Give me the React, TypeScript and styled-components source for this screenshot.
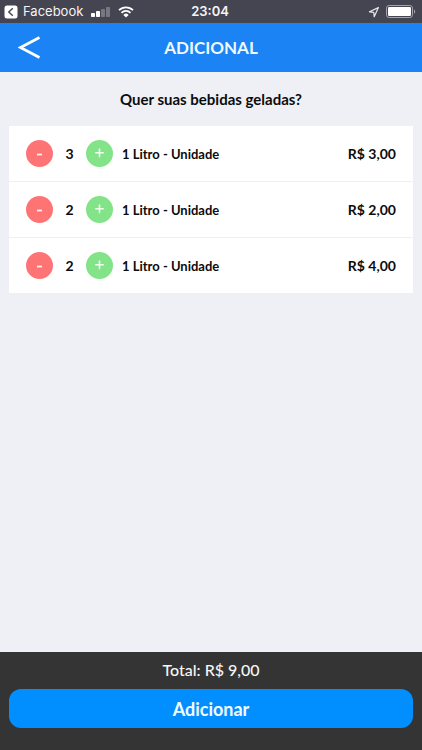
import React, { useState } from "react";
import styled, { createGlobalStyle } from "styled-components";

const GlobalStyle = createGlobalStyle`
  * { box-sizing: border-box; }
  body { margin: 0; background: #eff0f5; }
  button { border: 0; padding: 0; font: inherit; cursor: pointer; }
`;

const Screen = styled.div`
  min-height: 100vh;
  display: flex;
  flex-direction: column;
  background: #eff0f5;
  color: #0c0c0e;
  font-family: Lato, "Open Sans", sans-serif;
`;

const StatusBar = styled.div`
  display: grid;
  grid-template-columns: 1fr auto 1fr;
  align-items: center;
  height: 23px;
  padding: 0 6px 0 4px;
  background: #454451;
  color: #f4f4f6;
  font-family: Inter, Roboto, sans-serif;
  font-size: 13px;
  line-height: 23px;
`;

const StatusGroup = styled.div<{ $end?: boolean }>`
  display: flex;
  align-items: center;
  justify-content: ${(p) => (p.$end ? "flex-end" : "flex-start")};
  gap: ${(p) => (p.$end ? 6 : 8)}px;
`;

const BackToApp = styled.a`
  display: flex;
  align-items: center;
  gap: 5px;
  color: inherit;
  text-decoration: none;
`;

const Clock = styled.time`
  font-weight: 600;
`;

const Header = styled.header`
  display: grid;
  grid-template-columns: 48px 1fr 48px;
  align-items: center;
  height: 49px;
  background: #1c83f5;
  color: #fff;
`;

const BackButton = styled.button`
  display: flex;
  align-items: center;
  height: 48px;
  padding-left: 18px;
  background: none;
  color: inherit;
`;

const Title = styled.h1`
  margin: 0;
  color: #eefaff;
  font-size: 17px;
  font-weight: 700;
  line-height: 24px;
  text-align: center;
`;

const Content = styled.main`
  flex: 1;
  padding: 16px 9px;
`;

const Question = styled.h2`
  margin: 0 0 16px;
  font-size: 15px;
  font-weight: 700;
  line-height: 22px;
  text-align: center;
`;

const ItemList = styled.ul`
  display: flex;
  flex-direction: column;
  gap: 1px;
  margin: 0;
  padding: 0;
  list-style: none;
`;

const Item = styled.li`
  display: flex;
  align-items: center;
  height: 55px;
  padding: 0 17px;
  background: #fff;
  font-size: 14px;
  font-weight: 700;
  line-height: 20px;
`;

const StepButton = styled.button<{ $tone: "remove" | "add" }>`
  display: flex;
  align-items: center;
  justify-content: center;
  width: 27px;
  height: 27px;
  border-radius: 50%;
  background: ${(p) => (p.$tone === "add" ? "#83e388" : "#fe7474")};
  color: #fff;
`;

const Quantity = styled.output`
  width: 33px;
  text-align: center;
`;

const ItemName = styled.span`
  flex: 1;
  padding-left: 9px;
  font-size: 13px;
`;

const Footer = styled.footer`
  padding: 7px 9px 22px;
  background: #343434;
  color: #f6f6f6;
`;

const Total = styled.p`
  margin: 0 0 8px;
  font-size: 16px;
  font-weight: 500;
  line-height: 22px;
  text-align: center;
`;

const SubmitButton = styled.button`
  display: block;
  width: 100%;
  height: 39px;
  border-radius: 12px;
  background: #018fff;
  color: #f2fbff;

  && {
    font-size: 18px;
    font-weight: 700;
  }
`;

const AppBadgeIcon = () => (
  <svg width="14" height="14" viewBox="0 0 14 14" aria-hidden="true">
    <rect x="0.5" y="0.5" width="13" height="13" rx="2.5" fill="#fff" />
    <path d="M8.8 3.3 4.8 7l4 3.7" fill="none" stroke="#454451" strokeWidth="1.4" />
  </svg>
);

const SignalIcon = () => (
  <svg width="19" height="10" viewBox="0 0 19 10" aria-hidden="true">
    <rect x="0" y="6" width="4" height="4" rx="0.8" fill="#fff" />
    <rect x="5" y="4" width="4" height="6" rx="0.8" fill="#fff" />
    <rect x="10" y="2" width="4" height="8" rx="0.8" fill="#777681" />
    <rect x="15" y="0" width="4" height="10" rx="0.8" fill="#777681" />
  </svg>
);

const WifiIcon = () => (
  <svg width="16" height="12" viewBox="0 0 16 12" aria-hidden="true">
    <path d="M1 4.2a10 10 0 0 1 14 0M3.5 6.8a6.4 6.4 0 0 1 9 0" fill="none" stroke="#fff" strokeWidth="1.8" />
    <path d="M5.4 8.9a3.7 3.7 0 0 1 5.2 0L8 11.5z" fill="#fff" />
  </svg>
);

const LocationIcon = () => (
  <svg width="12" height="12" viewBox="0 0 12 12" aria-hidden="true">
    <path d="M10.4 1.6 1.4 5.8l4.3.5.5 4.4z" fill="none" stroke="#e6e6ea" strokeWidth="1.2" strokeLinejoin="round" />
  </svg>
);

const BatteryIcon = () => (
  <svg width="30" height="13" viewBox="0 0 30 13" aria-hidden="true">
    <rect x="0.5" y="0.5" width="26" height="12" rx="2.6" fill="none" stroke="#a5a4ac" />
    <rect x="2" y="2" width="23" height="9" rx="1.2" fill="#fff" />
    <path d="M28 4.4c1.5.5 1.5 3.7 0 4.2z" fill="#a5a4ac" />
  </svg>
);

const BackIcon = () => (
  <svg width="23" height="24" viewBox="0 0 23 24" aria-hidden="true">
    <path d="M21.5 1.5 2.5 11.5l19 10" fill="none" stroke="#fff" strokeWidth="2.7" />
  </svg>
);

const MinusIcon = () => (
  <svg width="13" height="13" viewBox="0 0 13 13" aria-hidden="true">
    <path d="M4 7.5h5" stroke="#ffeeee" strokeWidth="1.8" />
  </svg>
);

const PlusIcon = () => (
  <svg width="13" height="13" viewBox="0 0 13 13" aria-hidden="true">
    <path d="M2.2 5.8h8.6M6.5 1.4v8.8" stroke="#f1fff1" strokeWidth="1.5" />
  </svg>
);

const initialItems = [
  { id: 1, name: "1 Litro - Unidade", quantity: 3, price: 1 },
  { id: 2, name: "1 Litro - Unidade", quantity: 2, price: 1 },
  { id: 3, name: "1 Litro - Unidade", quantity: 2, price: 2 },
];

const formatPrice = (value: number) => `R$ ${value.toFixed(2).replace(".", ",")}`;

export default function App() {
  const [items, setItems] = useState(initialItems);
  const total = items.reduce((sum, item) => sum + item.quantity * item.price, 0);

  const change = (id: number, step: number) =>
    setItems((current) =>
      current.map((item) =>
        item.id === id ? { ...item, quantity: Math.max(0, item.quantity + step) } : item
      )
    );

  return (
    <Screen>
      <GlobalStyle />
      <StatusBar>
        <StatusGroup>
          <BackToApp href="#facebook">
            <AppBadgeIcon />
            Facebook
          </BackToApp>
          <SignalIcon />
          <WifiIcon />
        </StatusGroup>
        <Clock>23:04</Clock>
        <StatusGroup $end>
          <LocationIcon />
          <BatteryIcon />
        </StatusGroup>
      </StatusBar>
      <Header>
        <BackButton type="button" aria-label="Voltar">
          <BackIcon />
        </BackButton>
        <Title>ADICIONAL</Title>
      </Header>
      <Content>
        <Question>Quer suas bebidas geladas?</Question>
        <ItemList>
          {items.map((item) => (
            <Item key={item.id}>
              <StepButton type="button" $tone="remove" aria-label="Diminuir" onClick={() => change(item.id, -1)}>
                <MinusIcon />
              </StepButton>
              <Quantity>{item.quantity}</Quantity>
              <StepButton type="button" $tone="add" aria-label="Aumentar" onClick={() => change(item.id, 1)}>
                <PlusIcon />
              </StepButton>
              <ItemName>{item.name}</ItemName>
              <span>{formatPrice(item.quantity * item.price)}</span>
            </Item>
          ))}
        </ItemList>
      </Content>
      <Footer>
        <Total>Total: {formatPrice(total)}</Total>
        <SubmitButton type="button">Adicionar</SubmitButton>
      </Footer>
    </Screen>
  );
}
